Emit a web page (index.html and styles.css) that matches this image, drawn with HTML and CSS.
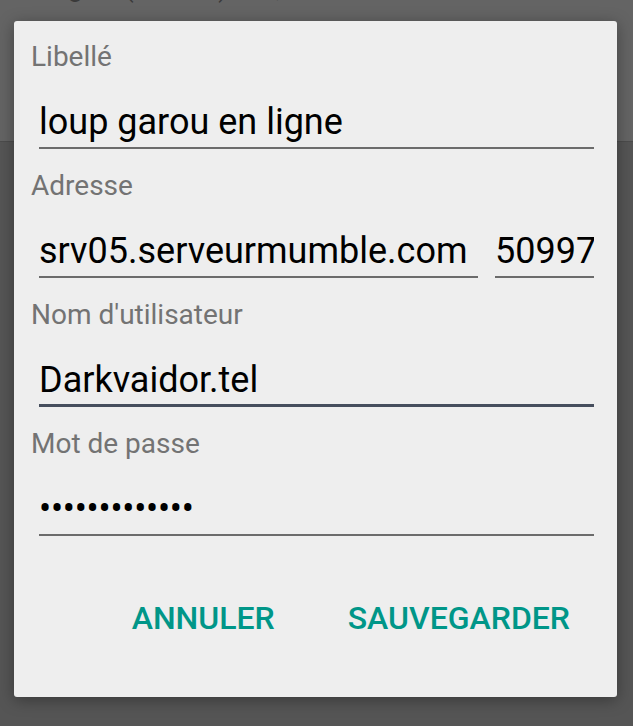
FILE: index.html
```html
<!DOCTYPE html>
<html lang="fr">
<head>
<meta charset="utf-8">
<title>Serveur</title>
<link rel="stylesheet" href="styles.css">
</head>
<body>
<div class="app">
  <div class="app-header">
    <div class="app-row"><span>Ping 10 (latence) : 14,0000</span><span>Zone</span></div>
  </div>
</div>
<div class="dialog">
  <form class="form">
    <div class="field">
      <label class="label">Libellé</label>
      <div class="inputs"><input class="input" type="text" value="loup garou en ligne"></div>
    </div>
    <div class="field">
      <label class="label">Adresse</label>
      <div class="inputs">
        <input class="input" type="text" value="srv05.serveurmumble.com">
        <input class="input port" type="text" value="50997">
      </div>
    </div>
    <div class="field">
      <label class="label">Nom d'utilisateur</label>
      <div class="inputs"><input class="input focused" type="text" value="Darkvaidor.tel"></div>
    </div>
    <div class="field">
      <label class="label">Mot de passe</label>
      <div class="inputs"><input class="input secret" type="password" value="motdepasse123"></div>
    </div>
  </form>
  <div class="actions">
    <button class="btn" type="button">ANNULER</button>
    <button class="btn" type="button">SAUVEGARDER</button>
  </div>
</div>
</body>
</html>
```
FILE: styles.css
```css
html, body {
  margin: 0;
  padding: 0;
  width: 633px;
  height: 726px;
  overflow: hidden;
  background: #555555;
  font-family: Roboto, "Noto Sans", sans-serif;
}

.app-header {
  height: 141px;
  background: #646464;
  border-bottom: 1px solid #4c4c4c;
  overflow: hidden;
}

.app-row {
  display: flex;
  justify-content: space-between;
  margin-top: -27px;
  padding: 0 15px 0 31px;
  font-size: 26px;
  line-height: 30px;
  color: #3a3a3a;
}

.dialog {
  position: absolute;
  left: 14px;
  top: 21px;
  width: 603px;
  height: 676px;
  box-sizing: border-box;
  padding: 20px 23px 0 17px;
  background: #eeeeee;
  border-radius: 3px;
  box-shadow: 0 3px 16px rgba(0, 0, 0, 0.35);
}

.form {
  margin: 0;
}

.field {
  margin-bottom: 21px;
}

.label {
  display: block;
  font-size: 28px;
  line-height: 32px;
  color: #737373;
}

.inputs {
  display: flex;
  gap: 17px;
  margin: 27px 0 0 8px;
}

.input {
  flex: 1;
  min-width: 0;
  height: 49px;
  box-sizing: border-box;
  margin: 0;
  padding: 0 0 3px 0;
  border: 0;
  border-bottom: 2px solid #6b6b6b;
  background: transparent;
  outline: none;
  font-family: Roboto, "Noto Sans", sans-serif;
  font-size: 36px;
  line-height: 44px;
  color: #000000;
}

.secret {
  letter-spacing: -0.25px;
}

.port {
  flex: 0 0 99px;
}

.focused {
  padding-bottom: 2px;
  border-bottom: 3px solid #464e5d;
}

.actions {
  display: flex;
  justify-content: flex-end;
  gap: 73px;
  margin-top: 62px;
  padding-right: 24px;
}

.btn {
  margin: 0;
  padding: 0;
  border: 0;
  background: transparent;
  font-family: Roboto, "Noto Sans", sans-serif;
  font-weight: 500;
  font-size: 32px;
  line-height: 40px;
  color: #009688;
}
```
